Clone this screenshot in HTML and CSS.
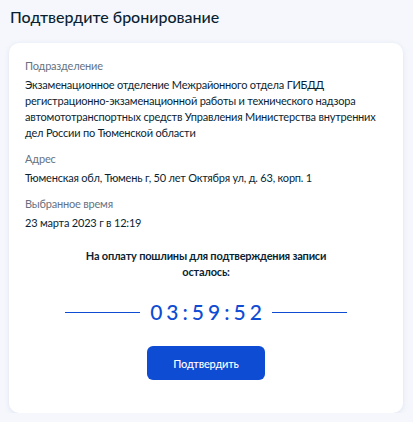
FILE: index.html
```html
<!DOCTYPE html>
<html lang="ru">
<head>
<meta charset="utf-8">
<link rel="stylesheet" href="styles.css">
</head>
<body>
<h1 class="title">Подтвердите бронирование</h1>
<div class="card">
  <div class="field">
    <div class="label">Подразделение</div>
    <div class="value">Экзаменационное отделение Межрайонного отдела ГИБДД регистрационно-экзаменационной работы и технического надзора автомототранспортных средств Управления Министерства внутренних дел России по Тюменской области</div>
  </div>
  <div class="field">
    <div class="label">Адрес</div>
    <div class="value">Тюменская обл, Тюмень г, 50 лет Октября ул, д. 63, корп. 1</div>
  </div>
  <div class="field">
    <div class="label">Выбранное время</div>
    <div class="value">23 марта 2023 г в 12:19</div>
  </div>
  <p class="notice">На оплату пошлины для подтверждения записи<br>осталось:</p>
  <div class="timer">
    <span class="line"></span>
    <span class="time">03:59:52</span>
    <span class="line"></span>
  </div>
  <div class="actions">
    <button class="btn">Подтвердить</button>
  </div>
</div>
</body>
</html>
```

FILE: styles.css
```css
* { box-sizing: border-box; }
html, body { margin: 0; padding: 0; }
body {
  background: #f5f7fc;
  font-family: Lato, "Noto Sans", sans-serif;
  color: #0b1f33;
  padding: 0 10px 0 9px;
}
.title {
  margin: 0;
  padding: 6px 0 0 1px;
  height: 43px;
  font-size: 16px;
  font-weight: 500;
  line-height: 22px;
  color: #0b1f33;
}
.card {
  background: #fff;
  border-radius: 10px;
  box-shadow: 0 1px 4px rgba(200, 210, 235, 0.5);
  padding: 15px 16px 32px 16px;
  height: 370px;
}
.field { margin-bottom: 10px; }
.label {
  font-size: 11px;
  letter-spacing: -0.2px;
  line-height: 16px;
  color: #66727f;
  margin-bottom: 3px;
}
.value {
  font-size: 11px;
  letter-spacing: -0.2px;
  line-height: 16px;
  color: #0b1f33;
}
.notice {
  margin: 17px 0 0 0;
  text-align: center;
  font-size: 11px;
  letter-spacing: -0.2px;
  font-weight: 700;
  line-height: 16px;
}
.timer {
  display: flex;
  align-items: center;
  justify-content: center;
  gap: 10px;
  margin-top: 18px;
  height: 28px;
}
.line {
  width: 75px;
  height: 1px;
  background: #0d4cd3;
}
.time {
  font-size: 21px;
  font-weight: 500;
  letter-spacing: 4px;
  margin-right: -4px;
  color: #0d4cd3;
  line-height: 28px;
}
.actions {
  display: flex;
  justify-content: center;
  margin-top: 20px;
}
.btn {
  width: 118px;
  height: 34px;
  border: none;
  border-radius: 6px;
  background: #0d4cd3;
  color: #fff;
  font-family: Lato, "Noto Sans", sans-serif;
  font-size: 11px;
  letter-spacing: -0.2px;
  font-weight: 500;
}
```
